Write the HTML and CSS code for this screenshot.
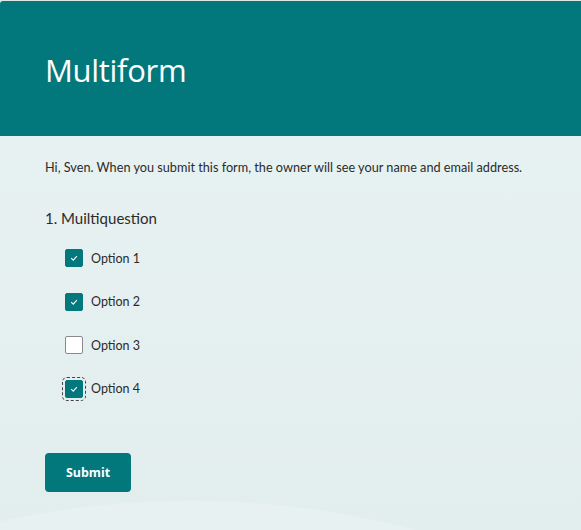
FILE: index.html
```html
<!DOCTYPE html>
<html>
<head>
<meta charset="utf-8">
<link rel="stylesheet" href="styles.css">
</head>
<body>
<div class="page">
  <header class="banner">
    <h1 class="title">Multiform</h1>
  </header>
  <main class="content">
    <p class="notice">Hi, Sven. When you submit this form, the owner will see your name and email address.</p>
    <div class="question">
      <div class="qtitle">1. Muiltiquestion</div>
      <div class="options">
        <label class="opt"><span class="box checked"><svg viewBox="0 0 10 10" class="tick"><path d="M2.2 5.2 L4.2 7.1 L7.9 3.1"/></svg></span><span class="olabel">Option 1</span></label>
        <label class="opt"><span class="box checked"><svg viewBox="0 0 10 10" class="tick"><path d="M2.2 5.2 L4.2 7.1 L7.9 3.1"/></svg></span><span class="olabel">Option 2</span></label>
        <label class="opt"><span class="box"></span><span class="olabel">Option 3</span></label>
        <label class="opt"><span class="box checked focus"><svg viewBox="0 0 10 10" class="tick"><path d="M2.2 5.2 L4.2 7.1 L7.9 3.1"/></svg></span><span class="olabel">Option 4</span></label>
      </div>
    </div>
    <button class="submit">Submit</button>
  </main>
</div>
</body>
</html>
```
FILE: styles.css
```css
html, body {
  margin: 0;
  padding: 0;
  height: 100%;
}
body {
  background: #e9f3f3;
  font-family: "Lato", "Noto Sans", sans-serif;
  color: #333;
}
.page {
  min-height: 530px;
  border-top: 1px solid #dfe6e6;
  background:
    radial-gradient(ellipse 600px 400px at 190px 899px, rgba(255,255,255,0.22) 99.6%, rgba(255,255,255,0) 100%),
    linear-gradient(180deg, #e9f3f3 0%, #e2eded 100%);
  overflow: hidden;
}
.banner {
  background: #03787c;
  height: 135px;
  border-top-left-radius: 3px;
  display: flex;
  align-items: center;
  padding-left: 45px;
}
.title {
  margin: 0;
  color: #fff;
  font-family: "Open Sans", sans-serif;
  font-weight: 400;
  font-size: 31px;
  letter-spacing: -0.3px;
  padding-top: 3px;
}
.content {
  padding: 22px 45px 38px;
}
.notice {
  margin: 0;
  font-size: 12.7px;
  line-height: 18px;
  color: #2b2b2b;
  white-space: nowrap;
}
.question {
  margin-top: 32px;
}
.qtitle {
  font-size: 15px;
  line-height: 20px;
  color: #2b2b2b;
}
.options {
  margin-top: 21px;
  padding-left: 20px;
  display: flex;
  flex-direction: column;
  gap: 25.5px;
}
.opt {
  display: flex;
  align-items: center;
  height: 18px;
}
.box {
  width: 16px;
  height: 16px;
  border: 1px solid #8a8a8a;
  border-radius: 2px;
  background: #fff;
  display: flex;
  align-items: center;
  justify-content: center;
  box-sizing: content-box;
}
.box.checked {
  background: #03787c;
  border-color: #03787c;
}
.box.focus {
  outline: 1px dashed #444;
  outline-offset: 2px;
}
.tick {
  width: 10px;
  height: 10px;
  fill: none;
  stroke: #fff;
  stroke-width: 1.1;
}
.olabel {
  margin-left: 8px;
  font-size: 12.5px;
  color: #2b2b2b;
}
.submit {
  margin-top: 55px;
  width: 86px;
  height: 39px;
  border: none;
  border-radius: 4px;
  background: #03787c;
  color: #fff;
  font-family: "Open Sans", "Noto Sans", sans-serif;
  font-weight: 700;
  font-size: 12.4px;
  display: block;
}
```
